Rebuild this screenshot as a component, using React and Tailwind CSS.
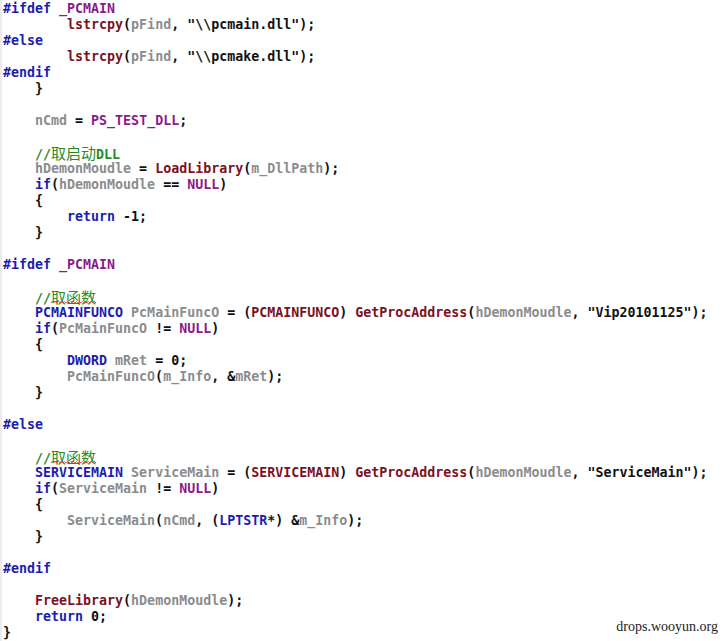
import React from "react";

const colors = {
  k: "text-[#1c1cb0]",
  m: "text-[#8b1a8b]",
  f: "text-[#7b1123]",
  v: "text-[#8c8c8c]",
  c: "text-[#2a8a2a]",
  p: "text-[#111111]",
};

// each line: array of [type, text]
const lines = [
  [["k", "#ifdef"], ["p", " "], ["m", "_PCMAIN"]],
  [["p", "        "], ["f", "lstrcpy"], ["p", "("], ["v", "pFind"], ["p", ", \"\\\\pcmain.dll\");"]],
  [["k", "#else"]],
  [["p", "        "], ["f", "lstrcpy"], ["p", "("], ["v", "pFind"], ["p", ", \"\\\\pcmake.dll\");"]],
  [["k", "#endif"]],
  [["p", "    }"]],
  [],
  [["p", "    "], ["v", "nCmd"], ["p", " = "], ["m", "PS_TEST_DLL"], ["p", ";"]],
  [],
  [["p", "    "], ["c", "//"], ["cj", "取启动"], ["c", "DLL"]],
  [["p", "    "], ["v", "hDemonMoudle"], ["p", " = "], ["f", "LoadLibrary"], ["p", "("], ["v", "m_DllPath"], ["p", ");"]],
  [["p", "    "], ["k", "if"], ["p", "("], ["v", "hDemonMoudle"], ["p", " == "], ["m", "NULL"], ["p", ")"]],
  [["p", "    {"]],
  [["p", "        "], ["k", "return"], ["p", " -1;"]],
  [["p", "    }"]],
  [],
  [["k", "#ifdef"], ["p", " "], ["m", "_PCMAIN"]],
  [],
  [["p", "    "], ["c", "//"], ["cw", "取函数"]],
  [["p", "    "], ["k", "PCMAINFUNCO"], ["p", " "], ["v", "PcMainFuncO"], ["p", " = ("], ["f", "PCMAINFUNCO"], ["p", ") "], ["f", "GetProcAddress"], ["p", "("], ["v", "hDemonMoudle"], ["p", ", \"Vip20101125\");"]],
  [["p", "    "], ["k", "if"], ["p", "("], ["v", "PcMainFuncO"], ["p", " != "], ["m", "NULL"], ["p", ")"]],
  [["p", "    {"]],
  [["p", "        "], ["k", "DWORD"], ["p", " "], ["v", "mRet"], ["p", " = 0;"]],
  [["p", "        "], ["v", "PcMainFuncO"], ["p", "("], ["v", "m_Info"], ["p", ", &"], ["v", "mRet"], ["p", ");"]],
  [["p", "    }"]],
  [],
  [["k", "#else"]],
  [],
  [["p", "    "], ["c", "//"], ["cw", "取函数"]],
  [["p", "    "], ["k", "SERVICEMAIN"], ["p", " "], ["v", "ServiceMain"], ["p", " = ("], ["f", "SERVICEMAIN"], ["p", ") "], ["f", "GetProcAddress"], ["p", "("], ["v", "hDemonMoudle"], ["p", ", \"ServiceMain\");"]],
  [["p", "    "], ["k", "if"], ["p", "("], ["v", "ServiceMain"], ["p", " != "], ["m", "NULL"], ["p", ")"]],
  [["p", "    {"]],
  [["p", "        "], ["v", "ServiceMain"], ["p", "("], ["v", "nCmd"], ["p", ", ("], ["k", "LPTSTR"], ["p", "*) &"], ["v", "m_Info"], ["p", ");"]],
  [["p", "    }"]],
  [],
  [["k", "#endif"]],
  [],
  [["p", "    "], ["f", "FreeLibrary"], ["p", "("], ["v", "hDemonMoudle"], ["p", ");"]],
  [["p", "    "], ["k", "return"], ["p", " 0;"]],
  [["p", "}"]],
];

const Squiggle = () => (
  <svg
    className="absolute left-0 bottom-[3px]"
    width="45"
    height="3"
    viewBox="0 0 45 3"
  >
    <path
      d="M0 2 L1.5 0.5 L3 2 L4.5 0.5 L6 2 L7.5 0.5 L9 2 L10.5 0.5 L12 2 L13.5 0.5 L15 2 L16.5 0.5 L18 2 L19.5 0.5 L21 2 L22.5 0.5 L24 2 L25.5 0.5 L27 2 L28.5 0.5 L30 2 L31.5 0.5 L33 2 L34.5 0.5 L36 2 L37.5 0.5 L39 2 L40.5 0.5 L42 2 L43.5 0.5 L45 2"
      fill="none"
      stroke="#e03a3a"
      strokeWidth="0.8"
    />
  </svg>
);

const Token = ({ type, text }) => {
  if (type === "cj") {
    return (
      <span className="text-[#2a8a2a] font-normal text-[15px] font-['Noto_Sans_CJK_SC',sans-serif]">
        {text}
      </span>
    );
  }
  if (type === "cw") {
    return (
      <span className="relative text-[#2a8a2a] font-normal text-[15px] font-['Noto_Sans_CJK_SC',sans-serif]">
        {text}
        <Squiggle />
      </span>
    );
  }
  return <span className={colors[type]}>{text}</span>;
};

export default function App() {
  return (
    <div className="relative w-[723px] h-[641px] bg-white overflow-hidden border-l-2 border-[#ececec]">
      <div className="pl-[1px] pt-[1px] font-['DejaVu_Sans_Mono',monospace] font-bold text-[13.3px] leading-[16px] whitespace-pre">
        {lines.map((line, i) => (
          <div key={i} className="h-[16px]">
            {line.map(([type, text], j) => (
              <Token key={j} type={type} text={text} />
            ))}
          </div>
        ))}
      </div>
      <div className="absolute right-[5px] bottom-[4px] font-['Liberation_Serif',serif] text-[14px] text-[#222]">
        drops.wooyun.org
      </div>
    </div>
  );
}
